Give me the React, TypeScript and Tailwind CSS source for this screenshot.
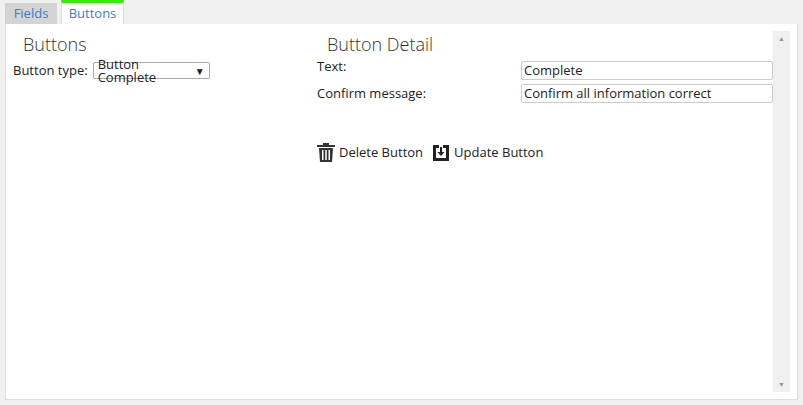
import React from 'react';

const font = { fontFamily: '"Open Sans", "Noto Sans", sans-serif' };

export default function App() {
  return (
    <div className="w-[803px] h-[405px] bg-[#f0f0f0] text-[13px] text-[#222]" style={font}>
      <div className="flex items-end h-[24px] pl-[5px] gap-[4px]">
        <div className="h-[21px] w-[52px] bg-[#d4d4d4] text-[#3a7bd5] flex items-center justify-center">Fields</div>
        <div className="h-[24px] w-[63px] bg-white border-t-[3px] border-[#33ee00] border-x border-x-[#ddd] text-[#3a7bd5] flex items-center justify-center">Buttons</div>
      </div>
      <div className="mx-[5px] h-[376px] bg-white border border-[#ddd] border-t-0 flex">
        <div className="w-[306px] pl-[7px] pt-[8px]">
          <div className="pl-[10px] text-[18px] font-light text-[#333] leading-[24px]">Buttons</div>
          <div className="flex items-center gap-[5px] mt-[5px]">
            <span>Button type:</span>
            <div className="h-[17px] w-[117px] border border-[#aaa] rounded-[2px] flex items-center justify-between px-[4px] text-[13px] leading-none">
              <span>Button Complete</span><span className="text-[10px]">▼</span>
            </div>
          </div>
        </div>
        <div className="flex-1 pt-[8px] pl-[5px]">
          <div className="pl-[10px] text-[18px] font-light text-[#333] leading-[24px]">Button Detail</div>
          <div className="flex items-center justify-between mt-[5px] h-[19px]">
            <span className="self-start -mt-[4px]">Text:</span>
            <div className="w-[252px] h-[19px] border border-[#ccc] rounded-[2px] px-[2px] leading-[17px]">Complete</div>
          </div>
          <div className="flex items-center justify-between mt-[4px] h-[19px]">
            <span>Confirm message:</span>
            <div className="w-[252px] h-[19px] border border-[#ccc] rounded-[2px] px-[2px] leading-[17px]">Confirm all information correct</div>
          </div>
          <div className="flex items-center gap-[10px] mt-[40px]">
            <div className="flex items-center gap-[4px]">
              <svg width="18" height="19" viewBox="0 0 18 19">
                <rect x="0" y="2" width="18" height="2" fill="#333" />
                <rect x="6" y="0" width="6" height="2" fill="#333" />
                <path d="M2 5h14l-1 14H3z" fill="#333" />
                <rect x="5" y="7" width="1.5" height="10" fill="#fff" />
                <rect x="8.25" y="7" width="1.5" height="10" fill="#fff" />
                <rect x="11.5" y="7" width="1.5" height="10" fill="#fff" />
              </svg>
              <span>Delete Button</span>
            </div>
            <div className="flex items-center gap-[5px]">
              <svg width="16" height="16" viewBox="0 0 16 16">
                <path d="M0 0h6v3H3v10h10V3h-3V0h6v16H0z" fill="#222" />
                <rect x="7" y="2" width="2" height="6" fill="#222" />
                <path d="M4.5 7h7L8 11z" fill="#222" />
              </svg>
              <span>Update Button</span>
            </div>
          </div>
        </div>
        <div className="w-[17px] my-[7px] mr-[7px] bg-[#f0f0f0] flex flex-col justify-between items-center py-[4px]">
          <span className="text-[7px] text-[#999] leading-none">▲</span>
          <span className="text-[7px] text-[#999] leading-none">▼</span>
        </div>
      </div>
    </div>
  );
}
